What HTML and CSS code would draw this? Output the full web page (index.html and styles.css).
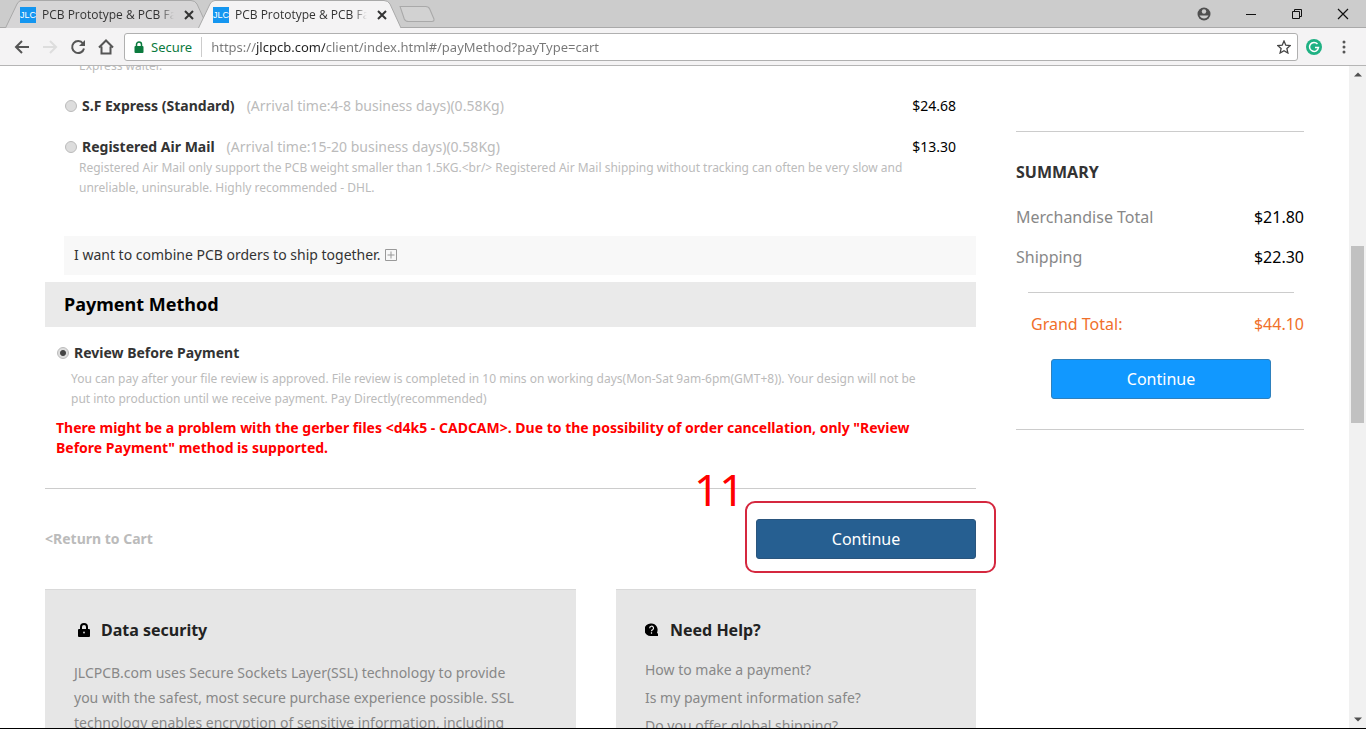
FILE: index.html
```html
<!DOCTYPE html>
<html lang="en">
<head>
    <meta charset="UTF-8">
    <title>PCB Prototype &amp; PCB Fabrication</title>
    <link rel="stylesheet" href="styles.css">
</head>
<body>

<div class="tab-strip">
    <div class="tab">
        <svg class="tab-shape" viewBox="0 0 204 28" preserveAspectRatio="none"><path d="M0.5 28 L12 4 Q13.500 0.500 17 0.500 H186 Q190 0.500 192 4 L203 28" fill="#d6d5d6" stroke="#a9a9a9"/></svg>
        <span class="favicon">JLC</span>
        <span class="tab-title">PCB Prototype &amp; PCB Fab</span>
        <button class="tab-close" aria-label="Close tab"><svg width="10" height="10" viewBox="0 0 10 10"><path d="M1 1l8 8M9 1l-8 8" stroke="#333" stroke-width="2"/></svg></button>
    </div>
    <div class="tab tab-active">
        <svg class="tab-shape" viewBox="0 0 204 28" preserveAspectRatio="none"><path d="M0.5 28 L12 4 Q13.500 0.500 17 0.500 H186 Q190 0.500 192 4 L203 28" fill="#f4f3f4" stroke="#a9a9a9"/></svg>
        <span class="favicon">JLC</span>
        <span class="tab-title">PCB Prototype &amp; PCB Fab</span>
        <button class="tab-close" aria-label="Close tab"><svg width="10" height="10" viewBox="0 0 10 10"><path d="M1 1l8 8M9 1l-8 8" stroke="#333" stroke-width="2"/></svg></button>
    </div>
    <button class="new-tab" aria-label="New tab"><svg width="36" height="18" viewBox="0 0 34 18" preserveAspectRatio="none"><path d="M1 1.500 H25 Q28 1.500 29 4 L33 14 Q33.500 16.500 31 16.500 H9 Q6 16.500 5 14 Z" fill="#d2d2d2" stroke="#a9a9a9"/></svg></button>
    <div class="window-buttons">
        <button aria-label="Profile"><svg width="14" height="14" viewBox="0 0 14 14"><circle cx="7" cy="7" r="6.500" fill="#4f4f4f"/><circle cx="7" cy="4.500" r="2.200" fill="#ccc"/><path d="M2.500 8.500 H11.500 Q10 11.500 7 11.500 T2.500 8.500Z" fill="#ccc"/></svg></button>
        <button aria-label="Minimize"><svg width="12" height="12" viewBox="0 0 12 12"><path d="M1 6.500h10" stroke="#111"/></svg></button>
        <button aria-label="Restore"><svg width="12" height="12" viewBox="0 0 12 12"><path d="M1.500 3.500h7v7h-7zM3.500 3V1.500h7v7H9" fill="none" stroke="#111"/></svg></button>
        <button aria-label="Close"><svg width="12" height="12" viewBox="0 0 12 12"><path d="M1 1l10 10M11 1L1 11" stroke="#111" stroke-width="1.200"/></svg></button>
    </div>
</div>

<div class="toolbar">
    <button class="nav-button" aria-label="Back"><svg width="16" height="16" viewBox="0 0 16 16"><path d="M15 8H2M8 2L2 8l6 6" fill="none" stroke="#555" stroke-width="2"/></svg></button>
    <button class="nav-button" aria-label="Forward"><svg width="16" height="16" viewBox="0 0 16 16"><path d="M1 8h13M8 2l6 6-6 6" fill="none" stroke="#ddd" stroke-width="2"/></svg></button>
    <button class="nav-button" aria-label="Reload"><svg width="16" height="16" viewBox="0 0 16 16"><path d="M13 4.500A6 6 0 1 0 14 9.500" fill="none" stroke="#555" stroke-width="2"/><path d="M15 1v6H9z" fill="#555"/></svg></button>
    <button class="nav-button" aria-label="Home"><svg width="16" height="16" viewBox="0 0 16 16"><path d="M1 8.500L8 1.500l7 7M3.500 7.500V14.500h9V7.500" fill="none" stroke="#555" stroke-width="2"/></svg></button>
    <div class="address-bar">
        <svg width="10" height="12" viewBox="0 0 10 12"><rect x="0.500" y="5" width="9" height="7" rx="1" fill="#0b7a3e"/><path d="M2.500 5V3.500a2.500 2.500 0 0 1 5 0V5" fill="none" stroke="#0b7a3e" stroke-width="1.500"/></svg>
        <span class="secure-label">Secure</span>
        <input class="url-input" type="text" aria-label="Address" value="https://jlcpcb.com/client/index.html#/payMethod?payType=cart">
        <button aria-label="Bookmark this page"><svg width="14" height="14" viewBox="0 0 14 14"><path d="M7 1l1.800 4.200 4.500.4-3.400 3 1 4.400L7 10.700 3.100 13l1-4.400-3.400-3 4.500-.4z" fill="none" stroke="#444" stroke-width="1.300"/></svg></button>
    </div>
    <button class="extension-button" aria-label="Grammar checker"><svg width="16" height="16" viewBox="0 0 16 16"><circle cx="8" cy="8" r="8" fill="#1fb183"/><path d="M11.500 5A4.500 4.500 0 1 0 12.500 8.500H9" fill="none" stroke="#fff" stroke-width="1.500"/></svg></button>
    <button aria-label="Menu"><svg width="4" height="14" viewBox="0 0 4 14"><circle cx="2" cy="2" r="1.500" fill="#555"/><circle cx="2" cy="7" r="1.500" fill="#555"/><circle cx="2" cy="12" r="1.500" fill="#555"/></svg></button>
</div>

<div class="viewport">
    <div class="page">
        <main class="checkout">
            <p class="note shipping-note">Express waiter.</p>
            <div class="shipping-row">
                <input type="radio" name="shipping" id="sf-express">
                <label for="sf-express"><b>S.F Express (Standard)</b><span class="arrival">(Arrival time:4-8 business days)(0.58Kg)</span></label>
                <span class="price">$24.68</span>
            </div>
            <div class="shipping-row">
                <input type="radio" name="shipping" id="air-mail">
                <label for="air-mail"><b>Registered Air Mail</b><span class="arrival">(Arrival time:15-20 business days)(0.58Kg)</span></label>
                <span class="price">$13.30</span>
            </div>
            <p class="note shipping-note">Registered Air Mail only support the PCB weight smaller than 1.5KG.&lt;br/&gt; Registered Air Mail shipping without tracking can often be very slow and unreliable, uninsurable. Highly recommended - DHL.</p>

            <div class="combine">
                I want to combine PCB orders to ship together.
                <button aria-label="Expand"><svg width="12" height="12" viewBox="0 0 12 12"><path d="M.5 .5h11v11H.5zM6 2.500v7M2.500 6h7" fill="none" stroke="#999"/></svg></button>
            </div>

            <h2 class="section-title">Payment Method</h2>
            <div class="payment-row">
                <input type="radio" name="payment" id="review-before" checked>
                <label for="review-before"><b>Review Before Payment</b></label>
            </div>
            <p class="note payment-note">You can pay after your file review is approved. File review is completed in 10 mins on working days(Mon-Sat 9am-6pm(GMT+8)). Your design will not be put into production until we receive payment. Pay Directly(recommended)</p>
            <p class="warning">There might be a problem with the gerber files &lt;d4k5 - CADCAM&gt;. Due to the possibility of order cancellation, only "Review Before Payment" method is supported.</p>

            <div class="actions">
                <a class="return-link" href="#">&lt;Return to Cart</a>
                <div class="continue-wrap">
                    <button class="continue-button continue-dark">Continue</button>
                    <span class="step-frame"></span>
                    <span class="step-number">11</span>
                </div>
            </div>

            <div class="cards">
                <section class="card card-security">
                    <h3><svg width="12" height="14" viewBox="0 0 12 14"><rect x="0" y="6" width="12" height="8" rx="1" fill="#000"/><path d="M3 6V4a3 3 0 0 1 6 0v2" fill="none" stroke="#000" stroke-width="2"/><circle cx="6" cy="9.500" r="1" fill="#ccc"/></svg>Data security</h3>
                    <p>JLCPCB.com uses Secure Sockets Layer(SSL) technology to provide you with the safest, most secure purchase experience possible. SSL technology enables encryption of sensitive information, including</p>
                </section>
                <section class="card card-help">
                    <h3><svg width="14" height="14" viewBox="0 0 14 14"><path d="M6.500 0.500a6.300 6.300 0 1 0 0 12.500H13V11l-1-1.500A6.300 6.300 0 0 0 6.500.5z" fill="#000"/><path d="M4.700 5.200a1.900 1.900 0 1 1 2.800 1.600q-1 .5-1 1.400M6.500 9.300v1.400" fill="none" stroke="#eee" stroke-width="1.200"/></svg>Need Help?</h3>
                    <a href="#">How to make a payment?</a>
                    <a href="#">Is my payment information safe?</a>
                    <a href="#">Do you offer global shipping?</a>
                </section>
            </div>
        </main>

        <aside class="summary">
            <h3>SUMMARY</h3>
            <div class="summary-row"><span>Merchandise Total</span><span class="amount">$21.80</span></div>
            <div class="summary-row"><span>Shipping</span><span class="amount">$22.30</span></div>
            <div class="summary-row grand-total"><span>Grand Total:</span><span>$44.10</span></div>
            <button class="continue-button">Continue</button>
        </aside>
    </div>

    <div class="scrollbar">
        <svg width="17" height="17" viewBox="0 0 17 17"><path d="M5 10.500l4-4 4 4z" fill="#505050"/></svg>
        <div class="scroll-before"></div>
        <div class="scroll-thumb"></div>
        <div class="scroll-after"></div>
        <svg width="17" height="17" viewBox="0 0 17 17"><path d="M5 6.500l4 4 4-4z" fill="#505050"/></svg>
    </div>
</div>

</body>
</html>
```
FILE: styles.css
```css
* {
    box-sizing: border-box;
}

body {
    margin: 0;
    height: 100vh;
    display: flex;
    flex-direction: column;
    overflow: hidden;
    font-family: "Noto Sans", "Open Sans", sans-serif;
    font-size: 14px;
    line-height: 20px;
    color: #333;
    background: #fff;
    border-bottom: 1px solid #000;
}

h2, h3, p {
    margin: 0;
}

a {
    text-decoration: none;
}

button {
    font-family: inherit;
    padding: 0;
    border: none;
    background: none;
    cursor: pointer;
}

svg {
    display: block;
    flex-shrink: 0;
}

/* browser window */
.tab-strip {
    display: flex;
    flex-shrink: 0;
    height: 28px;
    padding-left: 5px;
    background: #ccc;
    border-bottom: 1px solid #a9a9a9;
}

.tab {
    position: relative;
    z-index: 0;
    display: flex;
    align-items: center;
    width: 204px;
    height: 28px;
    margin-right: -11px;
    padding: 2px 11px 0 15px;
    font-family: "Open Sans", sans-serif;
    font-size: 12px;
}

.tab-active {
    z-index: 1;
}

.tab-shape {
    position: absolute;
    left: 0;
    top: 0;
    width: 100%;
    height: 100%;
    z-index: -1;
}

.favicon {
    width: 16px;
    height: 16px;
    margin-right: 6px;
    font-family: "Liberation Sans", sans-serif;
    font-size: 9px;
    line-height: 16px;
    color: #fff;
    background: #1496f0;
}

.tab-title {
    width: 132px;
    overflow: hidden;
    white-space: nowrap;
    -webkit-mask-image: linear-gradient(to right, #000 118px, transparent);
    mask-image: linear-gradient(to right, #000 118px, transparent);
}

.tab-close {
    margin-left: 10px;
}

.new-tab {
    margin-left: 8px;
}

.window-buttons {
    display: flex;
    align-items: center;
    gap: 34px;
    margin-left: auto;
    padding-right: 17px;
}

.toolbar {
    display: flex;
    flex-shrink: 0;
    align-items: center;
    height: 38px;
    padding: 0 20px 0 14px;
    background: #f4f3f4;
    border-bottom: 1px solid #b5b5b5;
}

.nav-button {
    margin-right: 12px;
}

.address-bar {
    display: flex;
    flex: 1;
    align-items: center;
    height: 28px;
    margin-left: -2px;
    padding: 0 6px 0 9px;
    background: #fff;
    border: 1px solid #b0b0b0;
    border-radius: 3px;
}

.secure-label {
    margin-left: 7px;
    padding-right: 9px;
    font-size: 13px;
    color: #0b7a3e;
    border-right: 1px solid #ccc;
}

.url-input {
    flex: 1;
    min-width: 0;
    padding: 0 0 0 9px;
    border: none;
    outline: none;
    font-family: inherit;
    font-size: 13px;
    /* host name darker than the rest of the address */
    background: linear-gradient(to right, #777 54px, #222 54px, #222 123px, #777 123px);
    -webkit-background-clip: text;
    background-clip: text;
    -webkit-text-fill-color: transparent;
}

.extension-button {
    margin: 0 20px 0 8px;
}

.viewport {
    display: flex;
    flex: 1;
    min-height: 0;
}

.scrollbar {
    display: flex;
    flex-direction: column;
    width: 17px;
    background: #f1f1f1;
}

.scroll-before {
    flex: 163;
}

.scroll-thumb {
    flex: 177;
    margin: 0 2px;
    background: #c1c1c1;
}

.scroll-after {
    flex: 288;
}

/* checkout page */
.page {
    display: flex;
    flex: 1;
    gap: 40px;
    min-width: 0;
    padding: 0 45px;
    overflow: hidden;
}

.checkout {
    flex: 1;
    min-width: 0;
    margin-top: -10px;
}

.note {
    font-size: 12px;
    color: #bbb;
}

.shipping-note {
    padding: 0 40px 0 34px;
}

input[type="radio"] {
    appearance: none;
    width: 12px;
    height: 12px;
    margin: 0 5px 0 0;
    border: 1px solid #bbb;
    border-radius: 50%;
    background: #ddd;
}

input[type="radio"]:checked {
    background: radial-gradient(#444 35%, #ddd 50%);
}

.shipping-row {
    display: flex;
    align-items: center;
    height: 21px;
    padding: 0 20px 2px;
    margin-top: 20px;
}

.arrival {
    margin-left: 12px;
    color: #bbb;
}

.price {
    margin-left: auto;
    color: #000;
}

.combine {
    display: flex;
    align-items: center;
    gap: 5px;
    height: 39px;
    margin: 38px 0 7px 19px;
    padding: 0 0 2px 10px;
    background: #f8f8f8;
}

.section-title {
    height: 45px;
    padding-left: 19px;
    font-size: 18px;
    line-height: 45px;
    color: #000;
    background: #eaeaea;
}

.payment-row {
    display: flex;
    align-items: center;
    padding-left: 12px;
    margin-top: 16px;
}

.payment-note {
    margin-top: 6px;
    padding: 0 40px 0 26px;
}

.warning {
    margin-top: 9px;
    padding: 0 20px 0 11px;
    font-weight: bold;
    color: #f00;
}

.actions {
    display: flex;
    align-items: center;
    justify-content: space-between;
    margin-top: 30px;
    padding: 30px 0;
    border-top: 1px solid #ccc;
}

.return-link {
    font-weight: bold;
    color: #bbb;
}

.continue-wrap {
    position: relative;
}

.continue-button {
    display: block;
    width: 220px;
    height: 40px;
    font-size: 16px;
    color: #fff;
    background: #1198ff;
    border: 1px solid #2e80bd;
    border-radius: 3px;
}

.continue-dark {
    background: #265f91;
    border-color: #2a557d;
}

.step-frame {
    position: absolute;
    inset: -18px -20px -14px -11px;
    border: 2px solid #d5283f;
    border-radius: 10px;
    pointer-events: none;
}

.step-number {
    position: absolute;
    left: -62px;
    top: -52px;
    font-size: 44px;
    line-height: 44px;
    color: #f00;
}

.cards {
    display: flex;
    gap: 40px;
}

.card {
    height: 300px;
    padding: 30px 29px;
    color: #888;
    background: #e6e6e6;
    border-top: 1px solid #d9d9d9;
}

.card h3 {
    display: flex;
    align-items: center;
    gap: 11px;
    font-size: 16px;
    line-height: 20px;
    color: #222;
}

.card-security {
    flex: 1;
}

.card-security h3 {
    padding-left: 4px;
}

.card-security p {
    margin-top: 20px;
    padding-right: 20px;
    line-height: 25px;
}

.card-help {
    width: 360px;
}

.card-help h3 {
    margin-bottom: 16px;
}

.card-help a {
    display: block;
    line-height: 28px;
    color: #888;
}

.summary {
    width: 288px;
    height: 299px;
    margin-top: 65px;
    padding-top: 30px;
    border-top: 1px solid #ccc;
    border-bottom: 1px solid #ccc;
}

.summary h3 {
    margin-bottom: 15px;
    font-size: 16px;
}

.summary-row {
    display: flex;
    justify-content: space-between;
    padding: 10px 0;
    font-size: 16px;
    color: #888;
}

.amount {
    color: #000;
}

.grand-total {
    position: relative;
    margin-top: 15px;
    padding: 22px 0 25px 15px;
    color: #f0702a;
}

.grand-total::before {
    content: "";
    position: absolute;
    left: 12px;
    right: 10px;
    top: 0;
    border-top: 1px solid #ccc;
}

.summary .continue-button {
    margin-left: 35px;
}
```
